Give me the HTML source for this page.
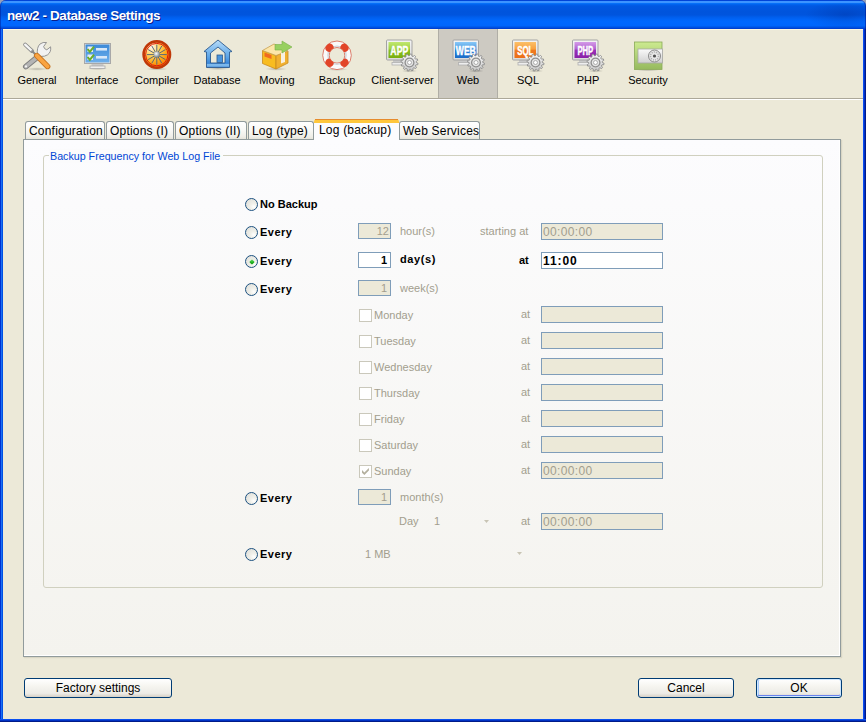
<!DOCTYPE html>
<html><head><meta charset="utf-8">
<style>
*{box-sizing:border-box;margin:0;padding:0}
html,body{width:866px;height:722px;overflow:hidden;background:#ECE9D8}
body{position:relative;font-family:"Liberation Sans",sans-serif;font-size:11px;color:#000}
.a{position:absolute}
.t{position:absolute;white-space:nowrap;line-height:13px;font-size:11px}
.b{font-weight:bold}
.g{color:#A29E8E}
#title{left:0;top:0;width:866px;height:29px;border-radius:6px 6px 0 0;box-shadow:inset 1px 0 0 rgba(0,20,140,0.45),inset -1px 0 0 rgba(0,20,140,0.5);
 background:linear-gradient(#0044D8 0px,#0044D8 1px,#3C94FF 1px,#3C94FF 3px,#0A7AFF 3px,#0066F2 4px,#0058E2 6px,#0054DC 12px,#0055DE 15px,#005EEC 17px,#0066FA 20px,#0068FF 22px,#0066FC 26px,#0052E2 27px,#0050E0 27.5px,#0040D0 28px,#0040D0 29px)}
#title .tt{left:7px;top:8px;font-size:13.5px;line-height:16px;font-weight:bold;color:#fff;text-shadow:1px 1px 0 #0A1E8C;letter-spacing:-0.4px}
#lb{left:0;top:29px;width:3px;height:693px;background:linear-gradient(90deg,#0030D0 0,#0030D0 1px,#1A70F4 1px,#1A70F4 2px,#0050E4 2px)}
#rb{left:863px;top:29px;width:3px;height:693px;background:linear-gradient(90deg,#0A4CF0 0,#0A4CF0 1px,#0030C4 1px,#0030C4 2px,#001A8C 2px)}
#bb{left:0;top:719px;width:866px;height:3px;background:linear-gradient(#0A50F0 0,#0A50F0 1px,#0032C4 1px,#0032C4 2px,#001A88 2px)}
#tb{left:3px;top:29px;width:860px;height:71px;border-bottom:1px solid #fff;border-top:1px solid #FFF8E0}
#tbline{left:3px;top:98px;width:860px;height:1px;background:#ACA899}
#sel{left:438px;top:29px;width:60px;height:69px;background:#CDCAC2;border-left:1px solid #B0AEA6;border-right:1px solid #B0AEA6}
.lbl{position:absolute;top:74px;line-height:13px;font-size:11px;text-align:center;white-space:nowrap}
.ic{position:absolute;top:38px;width:34px;height:34px}
#panel{left:23px;top:139px;width:818px;height:518px;border:1px solid #919B9C;
 background:linear-gradient(#FCFCFE,#F4F3EE);box-shadow:inset -1px -1px 0 #FFFFFF,1px 1px 1px rgba(80,80,60,0.12)}
.tab{position:absolute;top:121px;height:18px;border:1px solid #919B9C;border-bottom:none;border-radius:3px 3px 0 0;
 background:linear-gradient(#FFFFFF,#F9F9F6 45%,#EFEEE8 85%,#E6E4DA);font-size:12px;line-height:18px;padding-left:3px;white-space:nowrap;letter-spacing:0.2px}
.tab.on{top:119px;height:21px;background:#FCFCFE;border:none;border-radius:3px 3px 0 0;line-height:16px;padding-left:5px;border-top:3px solid #FFC73C;box-shadow:inset 0 1px 0 #FFC73C}
.tab.on:before{content:"";position:absolute;left:1px;right:1px;top:-3px;height:1px;background:#E68B2C}
#group{left:43px;top:155px;width:780px;height:433px;border:1px solid #D0D0BF;border-radius:3px}
#legend{left:49px;top:149px;padding:0 3px 0 1px;line-height:14px;font-size:10.7px;color:#0046D5;background:#FBFBFC}
.radio{position:absolute;left:245px;width:13px;height:13px;border-radius:50%;border:1px solid #1C5180;
 background:radial-gradient(circle at 70% 70%,#FFFFFF 0,#F0F0EA 30%,#DCDCD7 100%)}
.inp{position:absolute;height:17px;border:1px solid #7F9DB9;background:#ECE9D8;color:#A29E8E;font-size:11px;line-height:15px;white-space:nowrap;overflow:hidden}
.inp.on{background:#fff;color:#000;font-weight:bold}
.num{left:358px;width:33px;height:16px;line-height:14px;text-align:right;padding-right:2px}
.time{left:541px;width:122px;padding-left:1px;padding-top:1px;font-size:12px;line-height:15px;letter-spacing:0.35px}
.time.on{letter-spacing:0.9px}
.chk{position:absolute;left:359px;width:13px;height:13px;border:1px solid #CAC8BB;background:#fff}
.btn{position:absolute;top:678px;height:20px;border:1px solid #003C74;border-radius:3px;
 background:linear-gradient(#FFFFFF,#F6F5F0 40%,#ECEBE6 80%,#D6D0C5);text-align:center;font-size:12px;line-height:19px}
</style></head><body>

<div class="a" style="left:0;top:0;width:6px;height:6px;background:#98A0B8"></div><div class="a" style="left:860px;top:0;width:6px;height:6px;background:#98A0B8"></div>
<div id="title" class="a"><div class="a" style="left:790px;top:3px;width:76px;height:25px;background:radial-gradient(ellipse 40px 14px at 55px 12px,rgba(0,20,110,0.22),rgba(0,20,110,0) 100%)"></div><div class="a tt">new2 - Database Settings</div></div>
<div id="lb" class="a"></div><div id="rb" class="a"></div><div id="bb" class="a"></div>

<div id="tb" class="a"></div>
<div id="tbline" class="a"></div>
<div id="sel" class="a"></div>

<svg class="a" style="left:0;top:0" width="866" height="100" viewBox="0 0 866 100">
<defs>
<linearGradient id="gGear" x1="0" y1="0" x2="0" y2="1"><stop offset="0" stop-color="#FAFAFA"/><stop offset="1" stop-color="#C8C8C8"/></linearGradient>
<linearGradient id="gFrame" x1="0" y1="0" x2="0" y2="1"><stop offset="0" stop-color="#F4F4F4"/><stop offset="1" stop-color="#DADADA"/></linearGradient>
<linearGradient id="gGreen" x1="0" y1="0" x2="0" y2="1"><stop offset="0" stop-color="#C0E870"/><stop offset="0.45" stop-color="#A0D040"/><stop offset="0.5" stop-color="#8CC020"/><stop offset="1" stop-color="#78AE10"/></linearGradient>
<linearGradient id="gBlue" x1="0" y1="0" x2="0" y2="1"><stop offset="0" stop-color="#88C8F8"/><stop offset="0.45" stop-color="#4898E0"/><stop offset="0.5" stop-color="#2A80D8"/><stop offset="1" stop-color="#1A6CC8"/></linearGradient>
<linearGradient id="gOrange" x1="0" y1="0" x2="0" y2="1"><stop offset="0" stop-color="#FCC068"/><stop offset="0.45" stop-color="#F8A040"/><stop offset="0.5" stop-color="#F07A20"/><stop offset="1" stop-color="#EC6E18"/></linearGradient>
<linearGradient id="gPurple" x1="0" y1="0" x2="0" y2="1"><stop offset="0" stop-color="#D49AE8"/><stop offset="0.45" stop-color="#B060D0"/><stop offset="0.5" stop-color="#9A30B8"/><stop offset="1" stop-color="#8A20A8"/></linearGradient>
<linearGradient id="gScreen" x1="0" y1="0" x2="0" y2="1"><stop offset="0" stop-color="#3C8AD8"/><stop offset="1" stop-color="#6EB0EC"/></linearGradient>
<linearGradient id="gHouse" x1="0" y1="0" x2="0" y2="1"><stop offset="0" stop-color="#B8DCF8"/><stop offset="0.6" stop-color="#5EA6E8"/><stop offset="0.85" stop-color="#3A86D8"/><stop offset="0.9" stop-color="#8CC4F0"/><stop offset="1" stop-color="#4A90DC"/></linearGradient>
<radialGradient id="gComp" cx="0.3" cy="0.22" r="0.95"><stop offset="0" stop-color="#FFF6F0"/><stop offset="0.3" stop-color="#FFD868"/><stop offset="0.6" stop-color="#FFA818"/><stop offset="1" stop-color="#F06000"/></radialGradient>
<radialGradient id="gBall" cx="0.4" cy="0.35" r="0.7"><stop offset="0" stop-color="#FFFFFF"/><stop offset="1" stop-color="#60707A"/></radialGradient>
<linearGradient id="gSec" x1="0" y1="0" x2="0" y2="1"><stop offset="0" stop-color="#CCEA90"/><stop offset="1" stop-color="#96BA5E"/></linearGradient>
<linearGradient id="gSilver" x1="0" y1="0" x2="0" y2="1"><stop offset="0" stop-color="#FAFAFA"/><stop offset="1" stop-color="#D0D0D0"/></linearGradient>
<linearGradient id="gBox" x1="0" y1="0" x2="0" y2="1"><stop offset="0" stop-color="#FFD050"/><stop offset="1" stop-color="#F4A818"/></linearGradient>
<radialGradient id="gShadow" cx="0.5" cy="0.5" r="0.5"><stop offset="0" stop-color="#000" stop-opacity="0.22"/><stop offset="1" stop-color="#000" stop-opacity="0"/></radialGradient>
<g id="gear">
<ellipse cx="0" cy="8.5" rx="8" ry="1.6" fill="url(#gShadow)"/>
<path d="M6.80 0.00 L8.56 0.81 L8.31 2.23 L6.37 2.37 L5.89 3.40 L7.01 4.98 L6.08 6.08 L4.33 5.24 L3.40 5.89 L3.58 7.82 L2.23 8.31 L1.13 6.70 L0.00 6.80 L-0.81 8.56 L-2.23 8.31 L-2.37 6.37 L-3.40 5.89 L-4.98 7.01 L-6.08 6.08 L-5.24 4.33 L-5.89 3.40 L-7.82 3.58 L-8.31 2.23 L-6.70 1.13 L-6.80 0.00 L-8.56 -0.81 L-8.31 -2.23 L-6.37 -2.37 L-5.89 -3.40 L-7.01 -4.98 L-6.08 -6.08 L-4.33 -5.24 L-3.40 -5.89 L-3.58 -7.82 L-2.23 -8.31 L-1.13 -6.70 L-0.00 -6.80 L0.81 -8.56 L2.23 -8.31 L2.37 -6.37 L3.40 -5.89 L4.98 -7.01 L6.08 -6.08 L5.24 -4.33 L5.89 -3.40 L7.82 -3.58 L8.31 -2.23 L6.70 -1.13Z" fill="url(#gGear)" stroke="#8C8C8C" stroke-width="0.9"/>
<circle r="4.4" fill="#E4E4E4" stroke="#8E8E8E" stroke-width="1.3"/>
<circle r="2" fill="#FFFFFF" stroke="#A0A0A0" stroke-width="0.8"/>
</g>
<g id="mon">
<rect x="10" y="23.5" width="10" height="3" fill="#C8C8C8"/>
<rect x="9" y="26.5" width="12" height="2.5" fill="#EEEEEE" stroke="#B0B0B0" stroke-width="0.8"/>
<rect x="3.5" y="4" width="25.5" height="20" rx="1" fill="url(#gFrame)" stroke="#A4A4A4" stroke-width="1"/>
</g>
</defs>

<!-- General -->
<g transform="translate(19,38)">
<ellipse cx="18" cy="31" rx="11" ry="1.8" fill="url(#gShadow)"/>
<line x1="21" y1="17" x2="6.8" y2="28.6" stroke="#7E7E7E" stroke-width="5.6" stroke-linecap="round"/>
<line x1="21" y1="17" x2="6.8" y2="28.6" stroke="#B4B4B4" stroke-width="3.8" stroke-linecap="round"/>
<circle cx="7" cy="28.4" r="1.1" fill="#F4F4F4"/>
<path d="M18.5 16.5 Q17.5 9.5 21 6 Q24 3.8 27.5 4.5 L24.6 8.6 Q25.2 11.2 27.8 11.8 L31.6 8.8 Q32.4 14 28.6 16.8 Q25.5 18.8 22 18.4Z" fill="#F2F2F2" stroke="#8A8A8A" stroke-width="0.9"/>
<line x1="6.2" y1="6.6" x2="13" y2="13" stroke="#8A8A8A" stroke-width="4" stroke-linecap="round"/>
<line x1="6.2" y1="6.6" x2="13" y2="13" stroke="#F6F6F6" stroke-width="2.3" stroke-linecap="round"/>
<line x1="12.5" y1="12.5" x2="17" y2="17" stroke="#8A8A8A" stroke-width="2"/>
<line x1="17.8" y1="17.6" x2="28.6" y2="28.4" stroke="#C87420" stroke-width="5.6" stroke-linecap="round"/>
<line x1="17.8" y1="17.6" x2="28.6" y2="28.4" stroke="#F9A442" stroke-width="3.8" stroke-linecap="round"/>
</g>

<!-- Interface -->
<g transform="translate(79,38)">
<ellipse cx="18.5" cy="30.5" rx="10" ry="1.6" fill="url(#gShadow)"/>
<rect x="12.5" y="25" width="12" height="3" fill="#C8C8C8"/>
<rect x="11" y="28" width="15" height="2.5" fill="#F0F0F0" stroke="#AAAAAA" stroke-width="0.8"/>
<rect x="5.5" y="5.5" width="26" height="20" fill="#E4E4E4" stroke="#A8A8A8" stroke-width="1"/>
<rect x="6.5" y="6.5" width="24" height="18" fill="url(#gScreen)"/>
<rect x="8.5" y="8.5" width="5.5" height="5.5" fill="#E8EEF4"/>
<rect x="8.5" y="16.5" width="5.5" height="5.5" fill="#E8EEF4"/>
<path d="M8.6 11 L10.8 13.8 L15 8.6" fill="none" stroke="#6AAE2A" stroke-width="2"/>
<path d="M8.6 19 L10.8 21.8 L15 16.6" fill="none" stroke="#6AAE2A" stroke-width="2"/>
<rect x="17" y="10" width="11" height="2.6" fill="#D8E8F8"/>
<rect x="17" y="18" width="11" height="2.6" fill="#D8E8F8"/>
</g>

<!-- Compiler -->
<g transform="translate(139,36)">
<ellipse cx="18" cy="33" rx="11" ry="1.6" fill="url(#gShadow)"/>
<circle cx="17.8" cy="18.6" r="13.2" fill="url(#gComp)" stroke="#C03808" stroke-width="2.6"/>

<circle cx="17.8" cy="18.6" r="11.2" fill="none" stroke="#E01808" stroke-width="1"/>
<g stroke="#5A6878" stroke-width="1" transform="translate(17.8,18.6)">
<path d="M0 -10V10M-10 0H10M-8.66 -5L8.66 5M-8.66 5L8.66 -5M-5 -8.66L5 8.66M-5 8.66L5 -8.66"/>
</g>
<circle cx="17.8" cy="18.6" r="3" fill="url(#gBall)"/>
</g>

<!-- Database -->
<g transform="translate(199,36)">
<ellipse cx="19" cy="32.5" rx="12" ry="1.6" fill="url(#gShadow)"/>
<path d="M19 4 L5 15.5 L7.5 16 L7.5 31.5 L30.5 31.5 L30.5 16 L33 15.5 Z M19 11 L11.5 17 L11.5 27 L26 27 L26 17 Z" fill="url(#gHouse)" fill-rule="evenodd" stroke="#2C5A8E" stroke-width="0.9"/>
<rect x="18" y="19" width="5.5" height="7.5" fill="#4A94DC" stroke="#2C5A8E" stroke-width="0.8"/>
</g>

<!-- Moving -->
<g transform="translate(259,36)">
<ellipse cx="17" cy="33" rx="11" ry="1.8" fill="url(#gShadow)"/>
<path d="M3.5 14.5 L17 19.5 L17 33 L3.5 27.5Z" fill="#F8BC20" stroke="#C88A20" stroke-width="0.8"/>
<path d="M17 19.5 L29 15 L29 27 L17 33Z" fill="#F0B030" stroke="#C88A20" stroke-width="0.8"/>
<path d="M3.5 14.5 L15 8 L29 15 L17 19.5Z" fill="#FCE6A8" stroke="#C8A050" stroke-width="0.8"/>
<path d="M22 17 L26 15.5 L26 26 L22 27.5Z" fill="#F8F0E0"/>
<path d="M5.5 16.5 L12.5 19 L12.5 23 L5.5 20.5Z" fill="#F06A20"/>
<path d="M16 8.5 L23 8.5 L23 5 L33 11 L23 17 L23 14 L16 14Z" fill="#98D060" stroke="#78B048" stroke-width="0.6"/>
</g>

<!-- Backup -->
<g transform="translate(319,36)">
<clipPath id="cpRing"><path d="M3.6999999999999993 19.3 a14.3 14.3 0 1 0 28.6 0 a14.3 14.3 0 1 0 -28.6 0Z M10.2 19.3 a7.8 7.8 0 1 0 15.6 0 a7.8 7.8 0 1 0 -15.6 0Z" clip-rule="evenodd"/></clipPath>
<ellipse cx="18" cy="33.5" rx="11" ry="1.4" fill="url(#gShadow)"/>
<path d="M3.6999999999999993 19.3 a14.3 14.3 0 1 0 28.6 0 a14.3 14.3 0 1 0 -28.6 0Z M10.2 19.3 a7.8 7.8 0 1 0 15.6 0 a7.8 7.8 0 1 0 -15.6 0Z" fill="#FAFAFA" fill-rule="evenodd" stroke="#D8705E" stroke-width="0.9"/>
<circle cx="18" cy="19.3" r="9.1" fill="none" stroke="#D0D4DA" stroke-width="1.3"/>
<g clip-path="url(#cpRing)" fill="#E24428"><circle cx="25.50" cy="26.80" r="4.3"/><circle cx="10.50" cy="26.80" r="4.3"/><circle cx="10.50" cy="11.80" r="4.3"/><circle cx="25.50" cy="11.80" r="4.3"/></g>
</g>

<!-- Client-server -->
<g transform="translate(383,36)">
<use href="#mon"/>
<rect x="5.5" y="6" width="21.5" height="16" fill="url(#gGreen)"/>
<text x="16.3" y="19.2" font-family="Liberation Sans" font-weight="bold" font-size="12.4" fill="#fff" stroke="#fff" stroke-width="0.4" text-anchor="middle" transform="translate(16.3,0) scale(0.7,1) translate(-16.3,0)" style="paint-order:stroke">APP</text>
<use href="#gear" x="26.5" y="26.5"/>
</g>

<!-- Web -->
<g transform="translate(449.5,36)">
<use href="#mon"/>
<rect x="5.5" y="6" width="21.5" height="16" fill="url(#gBlue)"/>
<text x="16.3" y="19.2" font-family="Liberation Sans" font-weight="bold" font-size="12.4" fill="#fff" stroke="#fff" stroke-width="0.4" text-anchor="middle" transform="translate(16.3,0) scale(0.69,1) translate(-16.3,0)" style="paint-order:stroke">WEB</text>
<use href="#gear" x="26.5" y="26.5"/>
</g>

<!-- SQL -->
<g transform="translate(509,36)">
<use href="#mon"/>
<rect x="5.5" y="6" width="21.5" height="16" fill="url(#gOrange)"/>
<text x="16.3" y="19.2" font-family="Liberation Sans" font-weight="bold" font-size="12.4" fill="#fff" stroke="#fff" stroke-width="0.4" text-anchor="middle" transform="translate(16.3,0) scale(0.64,1) translate(-16.3,0)" style="paint-order:stroke">SQL</text>
<use href="#gear" x="26.5" y="26.5"/>
</g>

<!-- PHP -->
<g transform="translate(569,36)">
<use href="#mon"/>
<rect x="5.5" y="6" width="21.5" height="16" fill="url(#gPurple)"/>
<text x="16.3" y="19.2" font-family="Liberation Sans" font-weight="bold" font-size="12.4" fill="#fff" stroke="#fff" stroke-width="0.4" text-anchor="middle" transform="translate(16.3,0) scale(0.62,1) translate(-16.3,0)" style="paint-order:stroke">PHP</text>
<use href="#gear" x="26.5" y="26.5"/>
</g>

<!-- Security -->
<g transform="translate(630,36)">
<ellipse cx="18" cy="34" rx="12" ry="1.4" fill="url(#gShadow)"/>
<rect x="4.5" y="6" width="27.5" height="27.5" fill="url(#gSec)" stroke="#8AAA58" stroke-width="0.8"/>
<rect x="8" y="13" width="24.5" height="14" fill="url(#gSilver)" stroke="#A8A8A8" stroke-width="0.8"/>
<circle cx="24.5" cy="20" r="6" fill="#E8E8E8" stroke="#8A8A8A" stroke-width="1"/>
<circle cx="24.5" cy="20" r="4" fill="none" stroke="#B0B0B0" stroke-width="1.5" stroke-dasharray="1.2 1"/>
<circle cx="24.5" cy="20" r="1.6" fill="#505050"/>
</g>
</svg>

<!-- toolbar labels -->
<div class="lbl" style="left:7px;width:60px">General</div>
<div class="lbl" style="left:67px;width:60px">Interface</div>
<div class="lbl" style="left:127px;width:60px">Compiler</div>
<div class="lbl" style="left:187px;width:60px">Database</div>
<div class="lbl" style="left:247px;width:60px">Moving</div>
<div class="lbl" style="left:307px;width:60px">Backup</div>
<div class="lbl" style="left:367px;width:71px">Client-server</div>
<div class="lbl" style="left:438px;width:60px">Web</div>
<div class="lbl" style="left:498px;width:60px">SQL</div>
<div class="lbl" style="left:558px;width:60px">PHP</div>
<div class="lbl" style="left:618px;width:60px">Security</div>

<!-- tabs -->
<div id="panel" class="a"></div>
<div class="tab" style="left:25px;width:80px">Configuration</div>
<div class="tab" style="left:106px;width:68px">Options (I)</div>
<div class="tab" style="left:175px;width:72px">Options (II)</div>
<div class="tab" style="left:248px;width:66px">Log (type)</div>
<div class="tab" style="left:399px;width:81px">Web Services</div>
<div class="tab on" style="left:314px;width:85px">Log (backup)</div>

<div id="group" class="a"></div>
<div id="legend" class="t">Backup Frequency for Web Log File</div>

<!-- radios -->
<div class="radio" style="top:198px"></div>
<div class="radio" style="top:226px"></div>
<div class="radio" style="top:255px"><div class="a" style="left:3.5px;top:3.5px;width:4px;height:4px;border-radius:1px;transform:rotate(45deg);background:linear-gradient(135deg,#70E070,#20B020 60%,#109010)"></div></div>
<div class="radio" style="top:283px"></div>
<div class="radio" style="top:492px"></div>
<div class="radio" style="top:548px"></div>

<div class="t b" style="left:260px;top:198px">No Backup</div>
<div class="t b" style="left:260px;top:226px;letter-spacing:0.5px">Every</div>
<div class="t b" style="left:260px;top:255px;letter-spacing:0.5px">Every</div>
<div class="t b" style="left:260px;top:283px;letter-spacing:0.5px">Every</div>
<div class="t b" style="left:260px;top:492px;letter-spacing:0.5px">Every</div>
<div class="t b" style="left:260px;top:548px;letter-spacing:0.5px">Every</div>

<div class="inp num" style="top:223px;padding-right:1px">12</div>
<div class="inp num on" style="top:252px;padding-right:3px">1</div>
<div class="inp num" style="top:280px;padding-right:3px">1</div>
<div class="inp num" style="top:489px;padding-right:3px">1</div>

<div class="t g" style="left:400px;top:225px">hour(s)</div>
<div class="t b" style="left:400px;top:253px;letter-spacing:0.6px">day(s)</div>
<div class="t g" style="left:400px;top:282px">week(s)</div>
<div class="t g" style="left:400px;top:491px">month(s)</div>

<div class="t g" style="left:480px;top:225px">starting at</div>
<div class="inp time" style="top:223px">00:00:00</div>
<div class="t b" style="left:519px;top:254px">at</div>
<div class="inp time on" style="top:252px">11:00</div>

<!-- weekdays -->
<div class="chk" style="top:309px"></div><div class="t g" style="left:374px;top:309px">Monday</div><div class="t g" style="left:521px;top:308px">at</div><div class="inp time" style="top:306px"></div>
<div class="chk" style="top:335px"></div><div class="t g" style="left:374px;top:335px">Tuesday</div><div class="t g" style="left:521px;top:334px">at</div><div class="inp time" style="top:332px"></div>
<div class="chk" style="top:361px"></div><div class="t g" style="left:374px;top:361px">Wednesday</div><div class="t g" style="left:521px;top:360px">at</div><div class="inp time" style="top:358px"></div>
<div class="chk" style="top:387px"></div><div class="t g" style="left:374px;top:387px">Thursday</div><div class="t g" style="left:521px;top:386px">at</div><div class="inp time" style="top:384px"></div>
<div class="chk" style="top:413px"></div><div class="t g" style="left:374px;top:413px">Friday</div><div class="t g" style="left:521px;top:412px">at</div><div class="inp time" style="top:410px"></div>
<div class="chk" style="top:439px"></div><div class="t g" style="left:374px;top:439px">Saturday</div><div class="t g" style="left:521px;top:438px">at</div><div class="inp time" style="top:436px"></div>
<div class="chk" style="top:465px"><svg class="a" style="left:1px;top:1px" width="11" height="11" viewBox="0 0 11 11"><path d="M1 3 L3.4 5.4 L7.9 0.9 L7.9 3.6 L3.4 8.1 L1 5.7Z" fill="#B4B09E"/></svg></div><div class="t g" style="left:374px;top:465px">Sunday</div><div class="t g" style="left:521px;top:464px">at</div><div class="inp time" style="top:462px">00:00:00</div>

<!-- day row -->
<div class="t g" style="left:399px;top:515px">Day</div>
<div class="t g" style="left:434px;top:515px">1</div>
<svg class="a" style="left:484px;top:520px" width="5" height="3"><path d="M0 0H5L2.5 3Z" fill="#C8C4B4"/></svg>
<div class="t g" style="left:521px;top:515px">at</div>
<div class="inp time" style="top:513px">00:00:00</div>

<!-- MB row -->
<div class="t g" style="left:365px;top:548px">1 MB</div>
<svg class="a" style="left:517px;top:552px" width="5" height="3"><path d="M0 0H5L2.5 3Z" fill="#C8C4B4"/></svg>

<!-- buttons -->
<div class="btn" style="left:24px;width:148px">Factory settings</div>
<div class="btn" style="left:638px;width:96px">Cancel</div>
<div class="btn" style="left:756px;width:86px;box-shadow:inset 0 0 0 1px #CEE7FF,inset 0 -1px 0 1px #6982EE, inset 1px 0 0 1px #A9CAFB">OK</div>

</body></html>
